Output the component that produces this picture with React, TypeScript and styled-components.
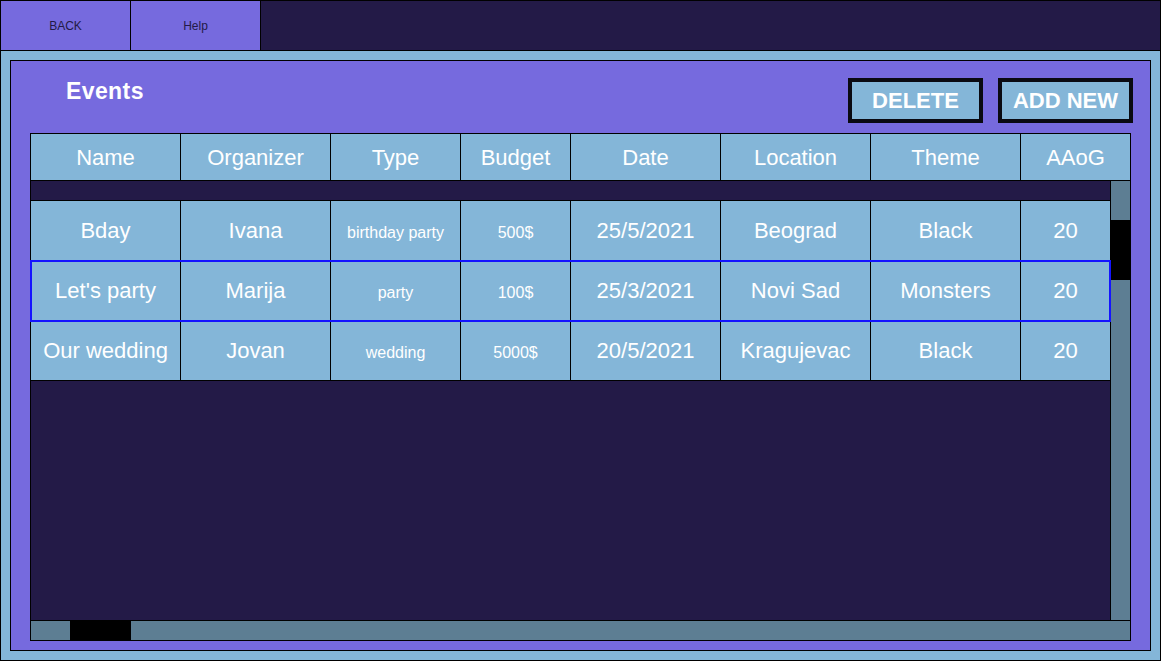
import React from "react";
import styled, { createGlobalStyle } from "styled-components";

const C = {
  purple: "#766ade",
  dark: "#231a47",
  light: "#84b6d8",
  track: "#5d7e93",
  select: "#1414ff",
};

const Global = createGlobalStyle`
  html, body { margin: 0; padding: 0; background: #fff; }
  body { font-family: "Liberation Sans", Arial, sans-serif; }
  * { box-sizing: border-box; }
`;

const Frame = styled.div`
  width: 1161px;
  height: 661px;
  border: 1px solid #000;
  display: flex;
  flex-direction: column;
  overflow: hidden;
`;

const TopBar = styled.div`
  height: 50px;
  flex: none;
  display: flex;
  background: ${C.dark};
  border-bottom: 1px solid #000;
`;

const NavButton = styled.button`
  width: 130px;
  height: 100%;
  margin: 0;
  padding: 0;
  border: none;
  border-right: 1px solid #000;
  background: ${C.purple};
  color: ${C.dark};
  font-family: "Liberation Sans", Arial, sans-serif;
  font-size: 12px;
  display: flex;
  align-items: center;
  justify-content: center;
`;

const Stage = styled.div`
  flex: 1;
  background: ${C.light};
  padding: 9px;
  display: flex;
`;

const Panel = styled.div`
  flex: 1;
  border: 1px solid #000;
  background: ${C.purple};
  padding: 0 19px 9px 19px;
  display: flex;
  flex-direction: column;
`;

const PanelHead = styled.div`
  height: 72px;
  flex: none;
  display: flex;
  align-items: flex-start;
`;

const Title = styled.h1`
  margin: 19px 0 0 36px;
  font-size: 23px;
  line-height: 23px;
  letter-spacing: 0.4px;
  font-weight: bold;
  color: #fff;
`;

const Actions = styled.div`
  margin-left: auto;
  margin-right: -2px;
  margin-top: 17px;
  display: flex;
  gap: 15px;
`;

const ActionButton = styled.button`
  width: 135px;
  height: 45px;
  margin: 0;
  padding: 0;
  border: 4px solid #0a0a12;
  background: ${C.light};
  color: #fff;
  font-family: "Liberation Sans", Arial, sans-serif;
  font-weight: bold;
  font-size: 22px;
  display: flex;
  align-items: center;
  justify-content: center;
`;

const Table = styled.div`
  flex: 1;
  border: 1px solid #000;
  border-right: none;
  display: flex;
  flex-direction: column;
  background: ${C.dark};
`;

const cols = [150, 150, 130, 110, 150, 150, 150, 110];
const bodyCols = [150, 150, 130, 110, 150, 150, 150, 89];

const HeadRow = styled.div`
  display: flex;
  height: 47px;
  flex: none;
  background: ${C.light};
`;

const HeadCell = styled.div<{ $w: number }>`
  width: ${(p) => p.$w}px;
  flex: none;
  border-right: 1px solid #000;
  border-bottom: 1px solid #000;
  color: #fff;
  font-size: 22px;
  display: flex;
  align-items: center;
  justify-content: center;
  padding-top: 2px;
`;

const Body = styled.div`
  flex: 1;
  display: flex;
  min-height: 0;
`;

const Rows = styled.div`
  flex: 1;
  padding-top: 19px;
`;

const RowList = styled.div`
  border-top: 1px solid #000;
`;

const Row = styled.div<{ $selected?: boolean }>`
  display: flex;
  height: 60px;
  background: ${C.light};
  position: relative;
  outline: ${(p) => (p.$selected ? `2px solid ${C.select}` : "none")};
  outline-offset: -1px;
  z-index: ${(p) => (p.$selected ? 1 : 0)};
`;

const Cell = styled.div<{ $w: number; $small?: boolean; $last?: boolean }>`
  width: ${(p) => p.$w}px;
  flex: none;
  border-right: ${(p) => (p.$last ? "none" : "1px solid #000")};
  border-bottom: 1px solid #000;
  color: #fff;
  font-size: ${(p) => (p.$small ? "16px" : "22px")};
  display: flex;
  align-items: center;
  justify-content: center;
  white-space: nowrap;
  padding-top: ${(p) => (p.$small ? "4px" : "1px")};
`;

const VScroll = styled.div`
  width: 21px;
  flex: none;
  background: ${C.track};
  border-left: 1px solid #000;
  border-right: 1px solid #000;
  display: flex;
  flex-direction: column;
`;

const VThumb = styled.div`
  margin-top: 39px;
  margin-left: -1px;
  width: 21px;
  height: 60px;
  background: #000;
`;

const HScroll = styled.div`
  height: 20px;
  flex: none;
  background: ${C.track};
  border-top: 1px solid #000;
  border-right: 1px solid #000;
  display: flex;
`;

const HThumb = styled.div`
  margin-left: 39px;
  margin-top: -1px;
  width: 61px;
  height: 20px;
  background: #000;
`;

const headers = ["Name", "Organizer", "Type", "Budget", "Date", "Location", "Theme", "AAoG"];

const events = [
  ["Bday", "Ivana", "birthday party", "500$", "25/5/2021", "Beograd", "Black", "20"],
  ["Let's party", "Marija", "party", "100$", "25/3/2021", "Novi Sad", "Monsters", "20"],
  ["Our wedding", "Jovan", "wedding", "5000$", "20/5/2021", "Kragujevac", "Black", "20"],
];

export default function App() {
  return (
    <>
      <Global />
      <Frame>
        <TopBar>
          <NavButton>BACK</NavButton>
          <NavButton>Help</NavButton>
        </TopBar>
        <Stage>
          <Panel>
            <PanelHead>
              <Title>Events</Title>
              <Actions>
                <ActionButton>DELETE</ActionButton>
                <ActionButton>ADD NEW</ActionButton>
              </Actions>
            </PanelHead>
            <Table>
              <HeadRow>
                {headers.map((h, i) => (
                  <HeadCell key={h} $w={cols[i]}>
                    {h}
                  </HeadCell>
                ))}
              </HeadRow>
              <Body>
                <Rows>
                  <RowList>
                    {events.map((ev, r) => (
                      <Row key={r} $selected={r === 1}>
                        {ev.map((v, i) => (
                          <Cell
                            key={i}
                            $w={bodyCols[i]}
                            $small={i === 2 || i === 3}
                            $last={i === ev.length - 1}
                          >
                            {v}
                          </Cell>
                        ))}
                      </Row>
                    ))}
                  </RowList>
                </Rows>
                <VScroll>
                  <VThumb />
                </VScroll>
              </Body>
              <HScroll>
                <HThumb />
              </HScroll>
            </Table>
          </Panel>
        </Stage>
      </Frame>
    </>
  );
}
